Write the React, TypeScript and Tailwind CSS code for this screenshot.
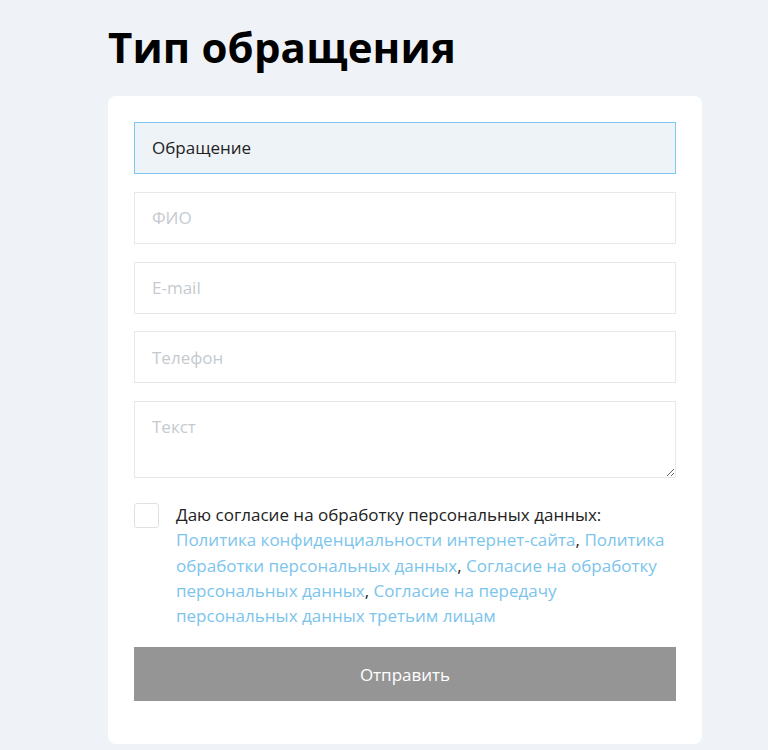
import React from "react";

export default function App() {
  const inputCls =
    "block w-full h-[52px] border border-[#e6e8ea] bg-white px-[17px] text-[17px] text-[#222] placeholder:text-[#c5cacf] outline-none";
  return (
    <div
      className="min-h-[750px] w-full bg-[#eff3f8] pl-[108px]"
      style={{ fontFamily: '"Open Sans", "Noto Sans", sans-serif' }}
    >
      <h1 className="pt-[18px] text-[42px] font-bold leading-[58px] text-black tracking-[0.15px]">
        Тип обращения
      </h1>
      <div className="mt-[20px] w-[594px] rounded-[8px] bg-white px-[26px] pb-[43px] pt-[26px]">
        <div className="flex flex-col gap-[17.75px]">
          <div className="flex h-[52px] items-center border border-[#7dc8ef] bg-[#eef3f8] px-[17px] text-[17px] text-[#222]">
            Обращение
          </div>
          <input className={inputCls} placeholder="ФИО" />
          <input className={inputCls} placeholder="E-mail" />
          <input className={inputCls} placeholder="Телефон" />
          <textarea
            className="block h-[77px] w-full border border-[#e6e8ea] bg-white px-[17px] pt-[12px] text-[17px] text-[#222] placeholder:text-[#c5cacf] outline-none"
            placeholder="Текст"
          />
        </div>
        <div className="mt-[24px] flex">
          <div className="mt-[1px] h-[25px] w-[25px] shrink-0 rounded-[3px] border border-[#dfe2e5] bg-white" />
          <div className="ml-[17px] text-[17px] leading-[25.3px] text-[#222]">
            <div>Даю согласие на обработку персональных данных:</div>
            <div>
              <span className="text-[#7cc4ec]">Политика конфиденциальности интернет-сайта</span>,{" "}
              <span className="text-[#7cc4ec]">Политика обработки персональных данных</span>,{" "}
              <span className="text-[#7cc4ec]">Согласие на обработку персональных данных</span>,{" "}
              <span className="text-[#7cc4ec]">Согласие на передачу персональных данных третьим лицам</span>
            </div>
          </div>
        </div>
        <button className="mt-[19px] flex h-[54px] w-full items-center justify-center bg-[#959595] text-[17px] text-white">
          Отправить
        </button>
      </div>
    </div>
  );
}
